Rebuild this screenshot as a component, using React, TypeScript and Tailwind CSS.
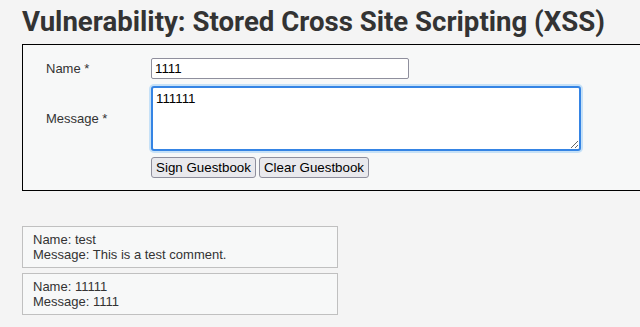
import React from 'react';

const comments = [
  { name: 'test', message: 'This is a test comment.' },
  { name: '11111', message: '1111' },
];

export default function App() {
  return (
    <div className="w-[640px] h-[327px] overflow-hidden bg-[#f4f4f4] text-[#333] font-['Liberation_Sans',Arial,sans-serif] text-[13px]">
      <div className="pl-[22px] pt-[6px]">
        <h1 className="font-['Roboto',sans-serif] font-bold text-[27.6px] leading-[32px] text-[#333] whitespace-nowrap">
          Vulnerability: Stored Cross Site Scripting (XSS)
        </h1>

        <div className="mt-[6px] w-[660px] border border-black bg-[#f7f8f8] pt-[13px] pb-[12px] pl-[23px]">
          <div className="flex items-center h-[21px]">
            <label className="w-[105px]">Name *</label>
            <input
              defaultValue="1111"
              className="w-[258px] h-[21px] border border-[#8f8f9d] rounded-[2px] bg-white px-[3px] text-[13.33px] text-black font-['Liberation_Sans',Arial,sans-serif]"
            />
          </div>
          <div className="flex items-center mt-[7px]">
            <label className="w-[105px]">Message *</label>
            <textarea
              defaultValue="111111"
              className="w-[430px] h-[65px] border-2 border-[#3584e4] rounded-[3px] bg-white px-[3px] py-[3px] text-[13.33px] leading-[16px] text-black outline-none shadow-[0_0_0_2px_#c6e1f7] font-['Liberation_Sans',Arial,sans-serif]"
            />
          </div>
          <div className="flex gap-[3px] mt-[6px] ml-[105px]">
            <button className="h-[21px] w-[105px] border border-[#8f8f9d] rounded-[3px] bg-[#e9e9ed] text-[13.33px] text-black">
              Sign Guestbook
            </button>
            <button className="h-[21px] w-[110px] border border-[#8f8f9d] rounded-[3px] bg-[#e9e9ed] text-[13.33px] text-black">
              Clear Guestbook
            </button>
          </div>
        </div>

        <div className="mt-[35px] flex flex-col gap-[5px]">
          {comments.map((c) => (
            <div
              key={c.name}
              className="w-[316px] h-[42px] border border-[#c0c0c0] bg-[#f7f8f8] pl-[10px] pt-[5px] leading-[15px] text-[#333]"
            >
              <div>Name: {c.name}</div>
              <div>Message: {c.message}</div>
            </div>
          ))}
        </div>
      </div>
    </div>
  );
}
